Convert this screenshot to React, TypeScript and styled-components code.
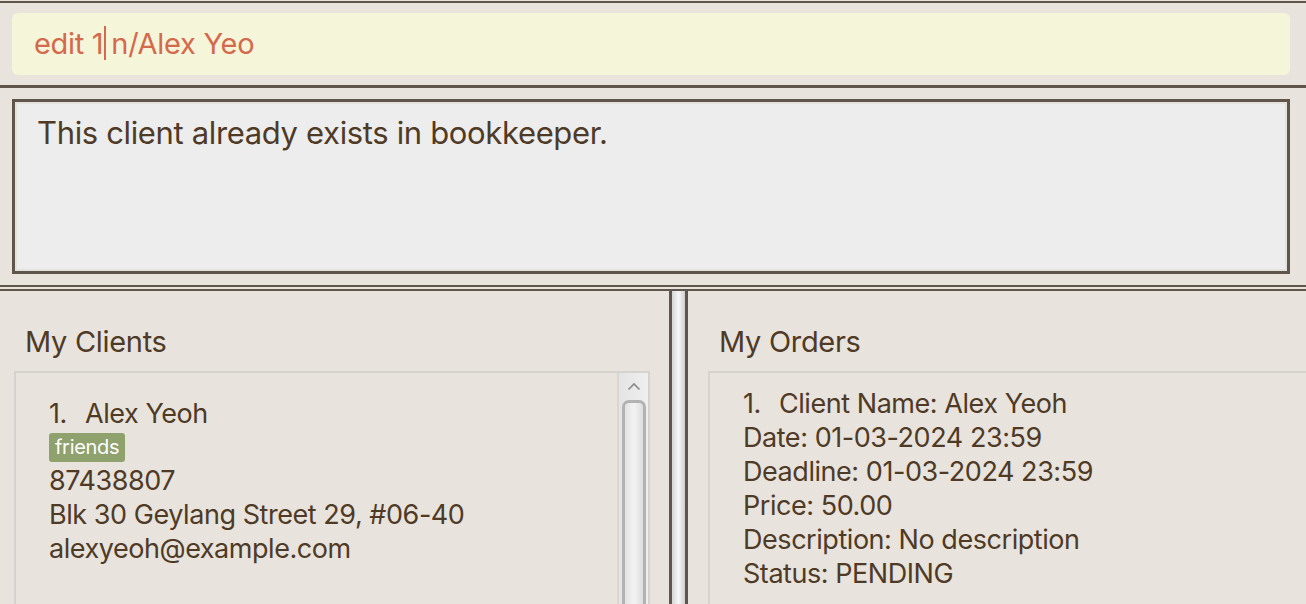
import React from "react";
import styled, { createGlobalStyle } from "styled-components";

const Global = createGlobalStyle`
  html, body { margin: 0; padding: 0; background: #e8e3dd; }
  body { font-family: Inter, "Noto Sans", sans-serif; }
  * { box-sizing: border-box; }
`;

const DARK = "#5f554b";
const BROWN = "#4f3a26";

const Window = styled.div`
  width: 1306px;
  height: 604px;
  overflow: hidden;
  background: #e8e3dd;
  padding-top: 1px;
  display: flex;
  flex-direction: column;
`;

const CommandSection = styled.div`
  border-top: 2px solid ${DARK};
  border-bottom: 3px solid ${DARK};
  padding: 10px 16px 10px 12px;
`;

const CommandBox = styled.div`
  height: 62px;
  background: #f5f5da;
  border-radius: 6px;
  padding: 0 22px 2px;
  display: flex;
  align-items: center;
  font-size: 29px;
  letter-spacing: -0.3px;
  color: #d4694c;
  white-space: pre;
`;

const Caret = styled.span`
  display: inline-block;
  width: 2px;
  height: 34px;
  background: #d4694c;
  margin: 0 5px 0 1px;
`;

const ResultSection = styled.div`
  border-bottom: 2px solid ${DARK};
  padding: 11px 16px 11px 12px;
`;

const ResultBox = styled.div`
  height: 175px;
  border: 3px solid ${DARK};
  background: #ededed;
  box-shadow: inset 0 0 0 2px #e4e2de;
  padding: 12px 22px;
  font-size: 31px;
  letter-spacing: -0.35px;
  color: ${BROWN};
`;

const Split = styled.div`
  margin-top: 2px;
  border-top: 2px solid ${DARK};
  flex: 1;
  display: flex;
  min-height: 0;
`;

const Pane = styled.div<{ $left?: boolean }>`
  display: flex;
  flex-direction: column;
  padding: ${(p) => (p.$left ? "0 19px 0 14px" : "0 0 0 20px")};
  width: ${(p) => (p.$left ? "669px" : "640px")};
  flex: none;
  min-height: 0;
`;

const Divider = styled.div`
  width: 19px;
  flex: none;
  border-left: 3px solid ${DARK};
  border-right: 3px solid ${DARK};
  background: linear-gradient(to right, #d6d6d6, #f7f7f7 50%, #cfcfcf);
`;

const PaneTitle = styled.div`
  height: 80px;
  padding: 33px 0 0 11px;
  font-size: 29px;
  letter-spacing: -0.3px;
  color: ${BROWN};
`;

const ListBox = styled.div<{ $wide?: boolean }>`
  flex: 1;
  border: 2px solid #d6d3ce;
  border-bottom: none;
  display: flex;
  width: ${(p) => (p.$wide ? "640px" : "auto")};
  min-height: 0;
`;

const ListContent = styled.div<{ $top: number }>`
  flex: 1;
  padding: ${(p) => p.$top}px 0 0 33px;
  display: flex;
  flex-direction: column;
  color: ${BROWN};
  font-size: 27px;
  letter-spacing: -0.45px;
`;

const Line = styled.div`
  height: 34px;
  line-height: 34px;
  white-space: pre;
`;

const Index = styled.span`
  display: inline-block;
  width: 36px;
`;

const TagRow = styled.div`
  height: 33px;
  display: flex;
  align-items: center;
`;

const Tag = styled.span`
  background: #8fa16c;
  color: #ffffff;
  font-size: 20px;
  letter-spacing: -0.3px;
  border-radius: 3px;
  padding: 2px 6px 3px;
  line-height: 24px;
`;

const ScrollTrack = styled.div`
  width: 31px;
  flex: none;
  border-left: 2px solid #d9d6d2;
  background: linear-gradient(to right, #e4e4e4, #efefef);
  display: flex;
  flex-direction: column;
  align-items: center;
`;

const Arrow = styled.div`
  height: 26px;
  display: flex;
  align-items: center;
  justify-content: center;
`;

const Thumb = styled.div`
  width: 24px;
  flex: 1;
  border: 3px solid #b2b2b2;
  border-bottom: none;
  border-radius: 7px 7px 0 0;
  background: linear-gradient(to right, #e2e2e2, #f3f3f3 50%, #dedede);
  margin-top: 1px;
`;

export default function App() {
  return (
    <>
      <Global />
      <Window>
        <CommandSection>
          <CommandBox>
            edit 1<Caret />n/Alex Yeo
          </CommandBox>
        </CommandSection>
        <ResultSection>
          <ResultBox>This client already exists in bookkeeper.</ResultBox>
        </ResultSection>
        <Split>
          <Pane $left>
            <PaneTitle>My Clients</PaneTitle>
            <ListBox>
              <ListContent $top={24}>
                <Line>
                  <Index>1.</Index>Alex Yeoh
                </Line>
                <TagRow>
                  <Tag>friends</Tag>
                </TagRow>
                <Line>87438807</Line>
                <Line>Blk 30 Geylang Street 29, #06-40</Line>
                <Line>alexyeoh@example.com</Line>
              </ListContent>
              <ScrollTrack>
                <Arrow>
                  <svg width="14" height="9" viewBox="0 0 14 9">
                    <path d="M1.5 7.5 L7 2 L12.5 7.5" fill="none" stroke="#8a8a8a" strokeWidth="1.6" />
                  </svg>
                </Arrow>
                <Thumb />
              </ScrollTrack>
            </ListBox>
          </Pane>
          <Divider />
          <Pane>
            <PaneTitle>My Orders</PaneTitle>
            <ListBox $wide>
              <ListContent $top={14}>
                <Line>
                  <Index>1.</Index>Client Name: Alex Yeoh
                </Line>
                <Line>Date: 01-03-2024 23:59</Line>
                <Line>Deadline: 01-03-2024 23:59</Line>
                <Line>Price: 50.00</Line>
                <Line>Description: No description</Line>
                <Line>Status: PENDING</Line>
              </ListContent>
            </ListBox>
          </Pane>
        </Split>
      </Window>
    </>
  );
}
